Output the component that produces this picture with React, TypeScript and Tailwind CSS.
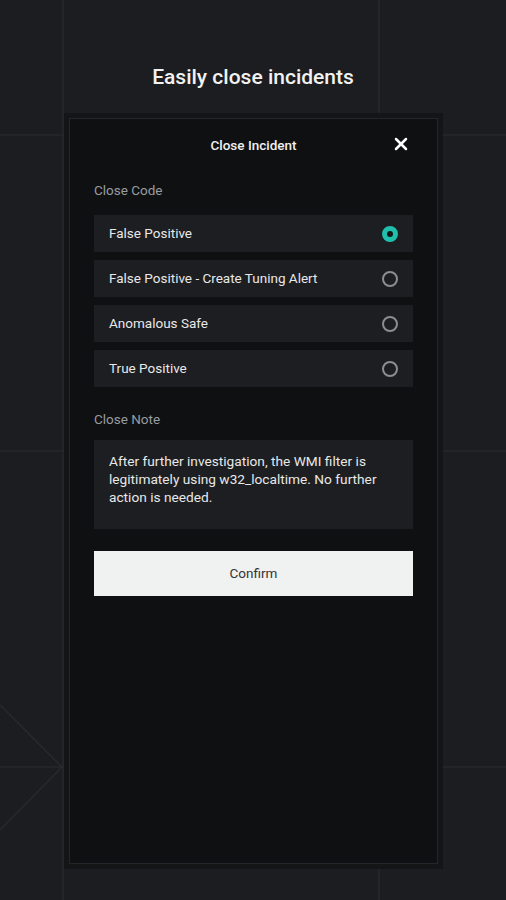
import { X } from "lucide-react";

const codes = [
  { label: "False Positive", selected: true },
  { label: "False Positive - Create Tuning Alert", selected: false },
  { label: "Anomalous Safe", selected: false },
  { label: "True Positive", selected: false },
];

const BackgroundGrid = () => (
  <svg
    className="absolute inset-0 pointer-events-none"
    width="506"
    height="900"
    viewBox="0 0 506 900"
  >
    <g stroke="#2a2c2f" strokeWidth="1.2" fill="none">
      <line x1="63" y1="0" x2="63" y2="900" />
      <line x1="379" y1="0" x2="379" y2="900" />
      <line x1="0" y1="135" x2="506" y2="135" />
      <line x1="0" y1="451" x2="506" y2="451" />
      <line x1="0" y1="767" x2="506" y2="767" />
      <polyline points="0,705 62,767 0,830" />
    </g>
  </svg>
);

const Radio = ({ on }: { on: boolean }) =>
  on ? (
    <span className="w-[16px] h-[16px] rounded-full border-[5px] border-[#1fbfac] bg-[#141517]" />
  ) : (
    <span className="w-[16px] h-[16px] rounded-full border-2 border-[#8b8d90]" />
  );

export default function App() {
  return (
    <div
      className="relative w-[506px] h-[900px] overflow-hidden bg-[#1c1d20]"
      style={{ fontFamily: "Roboto, 'Noto Sans', sans-serif" }}
    >
      <BackgroundGrid />
      <div className="relative">
        <h1 className="pt-[64px] text-center text-[21px] leading-[26px] font-medium text-[#f2f2f2]">
          Easily close incidents
        </h1>

        <div className="mt-[23px] ml-[64px] w-[379px] h-[756px] bg-[#141517] p-[5px]">
          <div className="h-full border border-[#24262a] bg-[#0f1012]">
            <div className="relative h-[51px] pt-[1px] flex items-center justify-center">
              <span className="text-[13.5px] font-medium text-[#f0f0f0]">Close Incident</span>
              <X
                className="absolute right-[26px] top-[15px] text-white"
                size={20}
                strokeWidth={3}
              />
            </div>

            <div className="px-[24px]">
              <div className="mt-[12px] text-[13.5px] leading-[16px] text-[#9a9ca0]">Close Code</div>

              <div className="mt-[17px] flex flex-col gap-[8px]">
                {codes.map((c) => (
                  <div
                    key={c.label}
                    className="h-[37px] flex items-center justify-between pl-[15px] pr-[15px] bg-[#1d1e21]"
                  >
                    <span className="text-[13.5px] text-[#e8e8e8]">{c.label}</span>
                    <Radio on={c.selected} />
                  </div>
                ))}
              </div>

              <div className="mt-[24px] text-[13.5px] leading-[16px] text-[#9a9ca0]">Close Note</div>

              <div className="mt-[13px] h-[89px] bg-[#1d1e21] px-[15px] pt-[12px] text-[13.7px] leading-[18px] text-[#e8e8e8]">
                After further investigation, the WMI filter is legitimately using w32_localtime. No further
                action is needed.
              </div>

              <button className="mt-[22px] w-full h-[45px] bg-[#f0f1f1] text-[13.5px] text-[#333436]">
                Confirm
              </button>
            </div>
          </div>
        </div>
      </div>
    </div>
  );
}
